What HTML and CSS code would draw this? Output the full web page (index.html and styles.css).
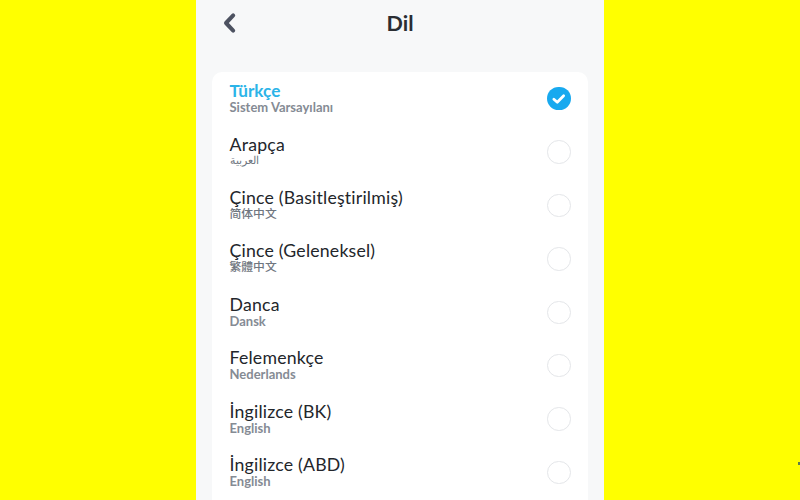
FILE: index.html
```html
<!DOCTYPE html>
<html lang="tr">
<head>
<meta charset="utf-8">
<title>Dil</title>
<link rel="stylesheet" href="styles.css">
</head>
<body>
<main class="phone">
  <header class="header">
    <svg class="back" viewBox="0 0 16 22" width="16" height="22"><path d="M12.2 3.4 L5 11 L12.2 18.6" fill="none" stroke="#4d5261" stroke-width="4" stroke-linecap="round" stroke-linejoin="round"/></svg>
    <h1 class="title">Dil</h1>
  </header>
  <section class="card">
    <div class="row">
      <div class="labels"><div class="name name-active">Türkçe</div><div class="sub">Sistem Varsayılanı</div></div>
      <span class="radio radio-on"><svg viewBox="0 0 24 24" width="24" height="24"><path d="M7 12.4 L10.5 15.6 L17 9" fill="none" stroke="#fff" stroke-width="2.8" stroke-linecap="round" stroke-linejoin="round"/></svg></span>
    </div>
    <div class="row">
      <div class="labels"><div class="name">Arapça</div><div class="sub sub-ar" lang="ar">العربية</div></div>
      <span class="radio"></span>
    </div>
    <div class="row">
      <div class="labels"><div class="name">Çince (Basitleştirilmiş)</div><div class="sub sub-cjk" lang="zh-Hans">简体中文</div></div>
      <span class="radio"></span>
    </div>
    <div class="row">
      <div class="labels"><div class="name">Çince (Geleneksel)</div><div class="sub sub-cjk" lang="zh-Hant">繁體中文</div></div>
      <span class="radio"></span>
    </div>
    <div class="row">
      <div class="labels"><div class="name">Danca</div><div class="sub">Dansk</div></div>
      <span class="radio"></span>
    </div>
    <div class="row">
      <div class="labels"><div class="name">Felemenkçe</div><div class="sub">Nederlands</div></div>
      <span class="radio"></span>
    </div>
    <div class="row">
      <div class="labels"><div class="name">İngilizce (BK)</div><div class="sub">English</div></div>
      <span class="radio"></span>
    </div>
    <div class="row">
      <div class="labels"><div class="name">İngilizce (ABD)</div><div class="sub">English</div></div>
      <span class="radio"></span>
    </div>
  </section>
</main>
<span class="speck"></span>
</body>
</html>
```
FILE: styles.css
```css
* { box-sizing: border-box; }
html, body { margin: 0; height: 500px; overflow: hidden; }
body {
  background: #ffff00;
  font-family: "Lato", "Noto Sans CJK SC", sans-serif;
  display: flex;
  justify-content: center;
  position: relative;
}
.phone {
  width: 408px;
  height: 500px;
  background: #f7f8f9;
  padding: 0 16px;
  overflow: hidden;
}
.header {
  height: 72px;
  position: relative;
  display: flex;
  justify-content: center;
  padding-top: 10px;
}
.title {
  margin: 0;
  font-size: 21.5px;
  line-height: 26px;
  font-weight: 700;
  color: #2a2d33;
}
.back {
  position: absolute;
  left: 9px;
  top: 12px;
}
.card {
  background: #fff;
  border-radius: 10px 10px 0 0;
  height: 428px;
}
.row {
  height: 53.4px;
  display: flex;
  align-items: center;
  justify-content: space-between;
  padding: 0 17.5px 0 17.5px;
}
.labels {
  display: flex;
  flex-direction: column;
  padding-bottom: 2px;
}
.name {
  font-size: 17.7px;
  line-height: 19px;
  color: #23262b;
  letter-spacing: 0.2px;
}
.name-active {
  color: #2cb4e8;
  font-size: 17.2px;
  font-weight: 700;
  letter-spacing: 0;
}
.sub {
  font-size: 13px;
  line-height: 14px;
  font-weight: 700;
  color: #858b94;
}
.sub-ar {
  font-size: 11px;
  line-height: 12px;
  font-weight: 400;
  color: #6f7680;
  margin-bottom: 2px;
}
.sub-cjk {
  font-size: 11.8px;
  font-weight: 500;
  color: #6f7680;
}
.radio {
  width: 23.5px;
  height: 23.5px;
  border-radius: 50%;
  border: 1.5px solid #e4e6e9;
  background: #fff;
  flex: none;
}
.radio-on {
  border: 0;
  background: #18a9ef;
  display: block;
}
.radio-on svg { display: block; width: 100%; height: 100%; }
.speck {
  position: absolute;
  left: 798px;
  top: 462px;
  width: 2px;
  height: 3px;
  background: #5a7a50;
}
```
